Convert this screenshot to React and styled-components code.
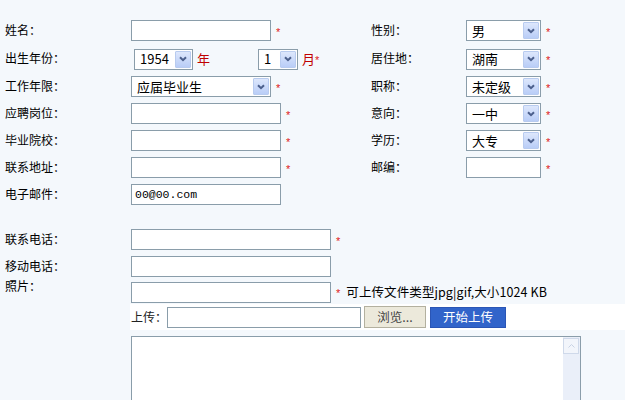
import React from "react";
import styled, { createGlobalStyle } from "styled-components";

const Global = createGlobalStyle`
  html, body { margin: 0; padding: 0; background: #f4f8fc; }
  body {
    font-family: "Noto Sans CJK SC", "Noto Sans", sans-serif;
    font-size: 12px;
    color: #000;
  }
`;

const Page = styled.div`
  width: 625px;
  height: 400px;
  overflow: hidden;
  padding-top: 16px;
  box-sizing: border-box;
`;

const Row = styled.div`
  display: grid;
  grid-template-columns: 131px 240px 95px 1fr;
  align-items: center;
  height: ${(p) => p.$h || 27}px;
  margin-top: ${(p) => p.$mt || 0}px;
`;

const Label = styled.div`
  padding-left: 5px;
  font-size: 12px;
  line-height: 16px;
  align-self: ${(p) => (p.$top ? "start" : "center")};
  margin-top: -2px;
`;

const SideLabel = styled.div`
  font-size: 12px;
  line-height: 16px;
  margin-top: -2px;
`;

const Field = styled.div`
  display: flex;
  align-items: center;
  gap: ${(p) => (p.$gap ?? 5)}px;
  ${(p) => (p.$span ? "grid-column: 2 / -1;" : "")}
`;

const TextInput = styled.input`
  width: ${(p) => p.$w}px;
  height: 21px;
  box-sizing: border-box;
  border: 1px solid #8a9daa;
  background: #fff;
  padding: 0 3px;
  margin: 0;
  font-family: "Liberation Mono", monospace;
  font-size: 11.5px;
  color: #000;
  outline: none;
`;

const Star = styled.span`
  color: #e02020;
  font-family: "Liberation Sans", sans-serif;
  font-size: 11px;
  line-height: 11px;
  margin-top: 3px;
`;

const Unit = styled.span`
  color: #c00000;
  font-size: 13px;
  line-height: 18px;
  margin-left: ${(p) => p.$ml || 0}px;
`;

const SelectBox = styled.div`
  width: ${(p) => p.$w}px;
  height: 21px;
  box-sizing: border-box;
  border: 1px solid #8a9daa;
  background: #fff;
  display: flex;
  align-items: center;
  padding: 1px 1px 1px 5px;
  margin-left: ${(p) => p.$ml || 0}px;
`;

const SelectText = styled.span`
  flex: 1;
  font-size: 13px;
  line-height: 18px;
  white-space: nowrap;
`;

const ArrowBtn = styled.span`
  width: 16px;
  height: 17px;
  flex: none;
  box-sizing: border-box;
  border: 1px solid #b8cbef;
  border-radius: 1px;
  background: linear-gradient(#dde7fc, #b9cdf7);
  display: flex;
  align-items: center;
  justify-content: center;
`;

const Select = ({ w, value, ml }) => (
  <SelectBox $w={w} $ml={ml}>
    <SelectText>{value}</SelectText>
    <ArrowBtn>
      <svg width="8" height="6" viewBox="0 0 8 6">
        <path d="M1 1.2 L4 4.2 L7 1.2" fill="none" stroke="#4b5f8c" strokeWidth="2" />
      </svg>
    </ArrowBtn>
  </SelectBox>
);

const Note = styled.span`
  font-size: 12.5px;
  line-height: 18px;
  white-space: nowrap;
  margin-left: 1px;
  letter-spacing: 0.1px;
`;

const UploadBar = styled.div`
  grid-column: 2 / -1;
  margin-left: -1px;
  padding-left: 1px;
  height: 26px;
  background: #fff;
  display: flex;
  align-items: center;
`;

const UploadLabel = styled.span`
  font-size: 12px;
  line-height: 16px;
  color: #222;
  width: 36px;
`;

const BrowseBtn = styled.button`
  width: 62px;
  height: 22px;
  margin: 0 0 0 3px;
  padding: 0;
  border: 1px solid #b3b09f;
  background: #ece9db;
  color: #444;
  font-family: inherit;
  font-size: 12.5px;
  line-height: 18px;
`;

const UploadBtn = styled.button`
  width: 76px;
  height: 21px;
  margin: 0 0 0 4px;
  padding: 0;
  border: 1px solid #2a55b5;
  background: #3164ca;
  color: #fff;
  font-family: inherit;
  font-size: 12.5px;
  line-height: 18px;
`;

const MemoRow = styled.div`
  display: grid;
  grid-template-columns: 131px 1fr;
  margin-top: 6px;
`;

const MemoBox = styled.div`
  grid-column: 2;
  width: 450px;
  height: 110px;
  box-sizing: border-box;
  border: 1px solid #8a9daa;
  background: #fff;
  display: flex;
`;

const MemoArea = styled.textarea`
  flex: 1;
  border: none;
  resize: none;
  outline: none;
  margin: 0;
  padding: 2px;
  background: transparent;
`;

const ScrollTrack = styled.div`
  width: 17px;
  background: #eaeff9;
  display: flex;
  flex-direction: column;
`;

const ScrollUp = styled.div`
  height: 16px;
  margin: 1px 1px 0 0;
  box-sizing: border-box;
  border: 1px solid #cfd9ea;
  background: #f2f5fb;
  display: flex;
  align-items: center;
  justify-content: center;
`;

export default function App() {
  return (
    <Page>
      <Global />
      <Row $h={29}>
        <Label>姓名：</Label>
        <Field>
          <TextInput $w={140} readOnly value="" />
          <Star>*</Star>
        </Field>
        <SideLabel>性别：</SideLabel>
        <Field>
          <Select w={75} value="男" />
          <Star>*</Star>
        </Field>
      </Row>
      <Row $h={28}>
        <Label>出生年份：</Label>
        <Field $gap={0}>
          <Select w={59} ml={3} value="1954" />
          <Unit $ml={4}>年</Unit>
          <Select w={40} ml={48} value="1" />
          <Unit $ml={4}>月</Unit>
          <Star>*</Star>
        </Field>
        <SideLabel>居住地：</SideLabel>
        <Field>
          <Select w={75} value="湖南" />
          <Star>*</Star>
        </Field>
      </Row>
      <Row>
        <Label>工作年限：</Label>
        <Field>
          <Select w={140} value="应届毕业生" />
          <Star>*</Star>
        </Field>
        <SideLabel>职称：</SideLabel>
        <Field>
          <Select w={75} value="未定级" />
          <Star>*</Star>
        </Field>
      </Row>
      <Row>
        <Label>应聘岗位：</Label>
        <Field>
          <TextInput $w={150} readOnly value="" />
          <Star>*</Star>
        </Field>
        <SideLabel>意向：</SideLabel>
        <Field>
          <Select w={75} value="一中" />
          <Star>*</Star>
        </Field>
      </Row>
      <Row>
        <Label>毕业院校：</Label>
        <Field>
          <TextInput $w={150} readOnly value="" />
          <Star>*</Star>
        </Field>
        <SideLabel>学历：</SideLabel>
        <Field>
          <Select w={75} value="大专" />
          <Star>*</Star>
        </Field>
      </Row>
      <Row>
        <Label>联系地址：</Label>
        <Field>
          <TextInput $w={150} readOnly value="" />
          <Star>*</Star>
        </Field>
        <SideLabel>邮编：</SideLabel>
        <Field>
          <TextInput $w={75} readOnly value="" />
          <Star>*</Star>
        </Field>
      </Row>
      <Row>
        <Label>电子邮件：</Label>
        <Field>
          <TextInput $w={150} readOnly value="00@00.com" />
        </Field>
      </Row>
      <Row $mt={18}>
        <Label>联系电话：</Label>
        <Field>
          <TextInput $w={200} readOnly value="" />
          <Star>*</Star>
        </Field>
      </Row>
      <Row>
        <Label>移动电话：</Label>
        <Field>
          <TextInput $w={200} readOnly value="" />
        </Field>
      </Row>
      <Row $h={24}>
        <Label $top>照片：</Label>
        <Field $span>
          <TextInput $w={200} readOnly value="" />
          <Star>*</Star>
          <Note>可上传文件类型jpg|gif,大小1024 KB</Note>
        </Field>
      </Row>
      <Row $h={26}>
        <UploadBar>
          <UploadLabel>上传：</UploadLabel>
          <TextInput $w={194} readOnly value="" />
          <BrowseBtn>浏览...</BrowseBtn>
          <UploadBtn>开始上传</UploadBtn>
        </UploadBar>
      </Row>
      <MemoRow>
        <MemoBox>
          <MemoArea readOnly />
          <ScrollTrack>
            <ScrollUp>
              <svg width="7" height="4" viewBox="0 0 7 4">
                <path d="M0.5 3.5 L3.5 0.5 L6.5 3.5" fill="none" stroke="#c8d2e4" strokeWidth="1" />
              </svg>
            </ScrollUp>
          </ScrollTrack>
        </MemoBox>
      </MemoRow>
    </Page>
  );
}
